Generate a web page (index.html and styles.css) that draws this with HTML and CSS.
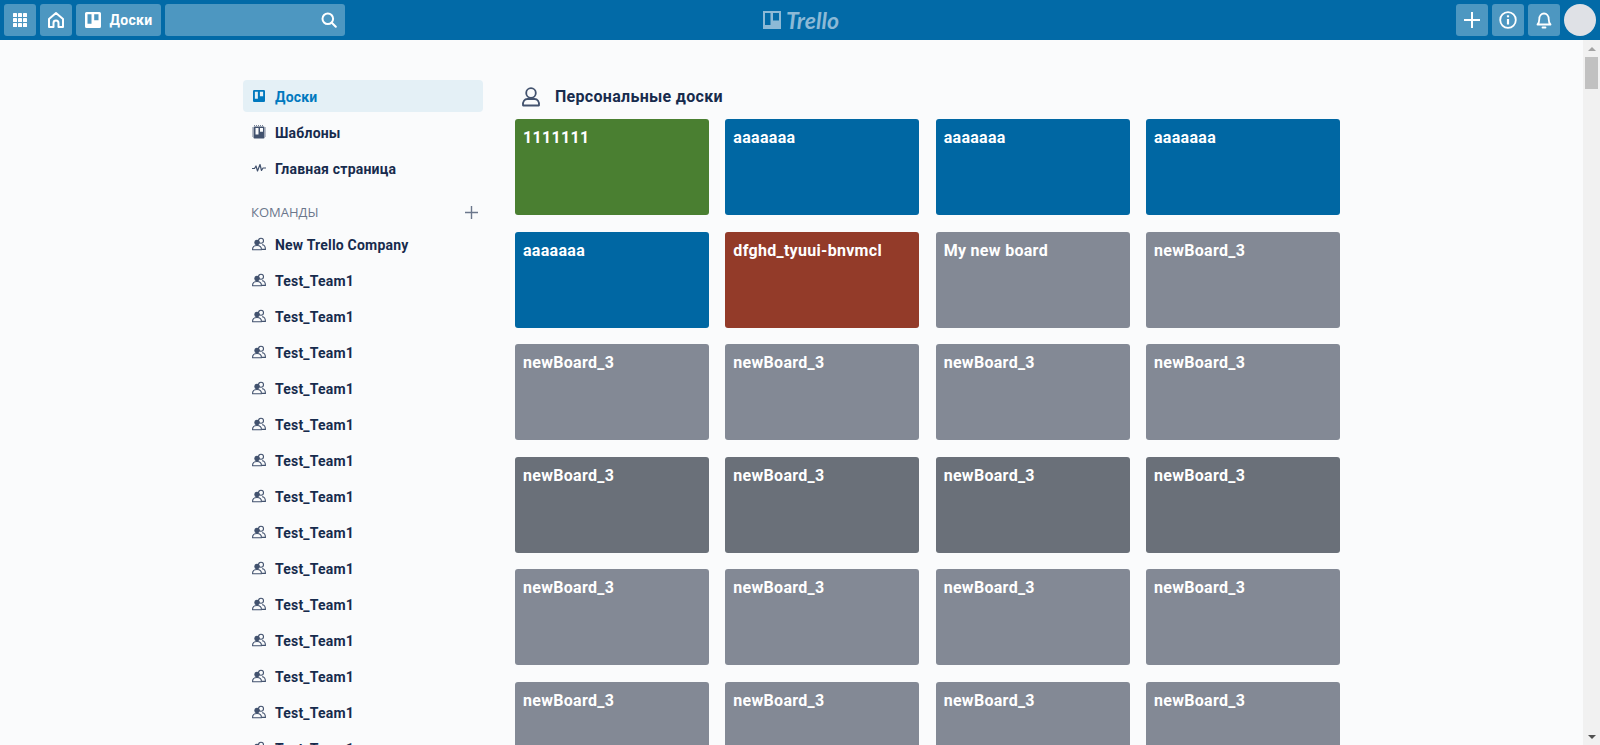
FILE: index.html
```html
<!DOCTYPE html>
<html lang="ru">
<head>
  <meta charset="UTF-8" />
  <title>Доски | Trello</title>
  <link rel="stylesheet" href="styles.css">
</head>
<body>

<svg class="sprite" xmlns="http://www.w3.org/2000/svg">
  <symbol id="i-board" viewBox="0 0 16 16">
    <path fill="currentColor" fill-rule="evenodd" d="M1.5 0h13A1.5 1.5 0 0 1 16 1.5v13a1.5 1.5 0 0 1-1.5 1.5h-13A1.5 1.5 0 0 1 0 14.5v-13A1.5 1.5 0 0 1 1.5 0zM2.5 2.2v9.6h4V2.2zM9.2 2.2v6h4.3v-6z"/>
  </symbol>
  <symbol id="i-team" viewBox="0 0 14 13">
    <g fill="none" stroke="currentColor" stroke-width="1.100">
      <circle cx="9" cy="3.300" r="2.500"/>
      <path d="M10 7.300c2.300 0 3.500 1.600 3.400 4.600H9.800"/>
    </g>
    <circle cx="5" cy="5" r="2.700" fill="currentColor"/>
    <path fill="none" stroke="currentColor" stroke-width="1.100" stroke-linejoin="round" d="M.6 12.300c-.2-3 1.300-4.300 4.400-4.300s4.600 1.300 4.400 4.300z"/>
  </symbol>
</svg>

<header class="topbar">
  <div class="topbar-left">
    <a class="top-btn" href="#">
      <svg width="16" height="16" viewBox="0 0 16 16" fill="#fff">
        <rect x="1" y="1" width="4" height="4" rx=".6"/><rect x="6" y="1" width="4" height="4" rx=".6"/><rect x="11" y="1" width="4" height="4" rx=".6"/>
        <rect x="1" y="6" width="4" height="4" rx=".6"/><rect x="6" y="6" width="4" height="4" rx=".6"/><rect x="11" y="6" width="4" height="4" rx=".6"/>
        <rect x="1" y="11" width="4" height="4" rx=".6"/><rect x="6" y="11" width="4" height="4" rx=".6"/><rect x="11" y="11" width="4" height="4" rx=".6"/>
      </svg>
    </a>
    <a class="top-btn" href="#">
      <svg width="18" height="18" viewBox="0 0 18 18" fill="none" stroke="#fff" stroke-width="2" stroke-linejoin="round">
        <path d="M2 16V8l7-6 7 6v8h-4.500v-4a2.500 2.500 0 0 0-5 0v4z"/>
      </svg>
    </a>
    <a class="top-btn boards-btn" href="#">
      <svg class="boards-icon" width="16" height="16"><use href="#i-board"/></svg>
      <span>Доски</span>
    </a>
    <div class="search">
      <svg width="16" height="16" viewBox="0 0 16 16" fill="none" stroke="#fff" stroke-width="2" stroke-linecap="round">
        <circle cx="6.800" cy="6.800" r="5.300"/><path d="M10.800 10.800l4 4"/>
      </svg>
    </div>
  </div>

  <a class="logo" href="#">
    <svg width="18" height="18" viewBox="0 0 18 18">
      <path fill="#8cb9d6" fill-rule="evenodd" d="M0 0h18v18H0zM2 2v12h5.500V2zM10 2v7.500h6V2z"/>
    </svg>
    <span>Trello</span>
  </a>

  <div class="topbar-right">
    <a class="top-btn" href="#">
      <svg width="16" height="16" viewBox="0 0 16 16" stroke="#fff" stroke-width="2"><path d="M8 0v16M0 8h16"/></svg>
    </a>
    <a class="top-btn" href="#">
      <svg width="18" height="18" viewBox="0 0 18 18" fill="none" stroke="#fff" stroke-width="1.800">
        <circle cx="9" cy="9" r="7.800"/><path d="M9 8v5.500" stroke-width="2.200"/><path d="M9 4.300v2" stroke-width="2.200"/>
      </svg>
    </a>
    <a class="top-btn" href="#">
      <svg width="16" height="18" viewBox="0 0 16 18" fill="none" stroke="#fff" stroke-width="1.800" stroke-linejoin="round">
        <path d="M1.500 13.500c1.500-1.500 1.800-2.500 1.800-5.500 0-3 2-5.500 4.700-5.500s4.700 2.500 4.700 5.500c0 3 .3 4 1.800 5.500z"/>
        <path d="M6.500 16.500h3" stroke-linecap="round"/>
      </svg>
    </a>
    <div class="avatar"></div>
  </div>
</header>

<div class="layout">
  <div class="content">
    <nav class="sidebar">
      <a class="nav-item active" href="#">
        <svg class="nav-icon small"><use href="#i-board"/></svg>
        <span>Доски</span>
      </a>
      <a class="nav-item" href="#">
        <svg class="nav-icon" viewBox="0 0 14 14">
          <path fill="currentColor" fill-rule="evenodd" d="M2.500 1.500h9a1 1 0 0 1 1 1v10a1 1 0 0 1-1 1h-9a1 1 0 0 1-1-1v-10a1 1 0 0 1 1-1zM3.500 3v6.500h3V3zM8 3v3.800h3V3z"/>
          <path stroke="currentColor" stroke-width=".8" stroke-dasharray="1 1" fill="none" d="M2 .4h10M.4 2.500v9M13.600 2.500v9"/>
        </svg>
        <span>Шаблоны</span>
      </a>
      <a class="nav-item" href="#">
        <svg class="nav-icon" viewBox="0 0 14 14" fill="none" stroke="currentColor" stroke-width="1.200" stroke-linejoin="round">
          <path d="M0 7.500h2.500L4 5l1.500 5L8 3.500l1.500 6L11 7h3"/>
        </svg>
        <span>Главная страница</span>
      </a>

      <div class="teams-head">
        <span>Команды</span>
        <svg width="13" height="13" viewBox="0 0 13 13" stroke="currentColor" stroke-width="1.400"><path d="M6.500 0v13M0 6.500h13"/></svg>
      </div>

      <a class="nav-item" href="#"><svg class="nav-icon"><use href="#i-team"/></svg><span>New Trello Company</span></a>
      <a class="nav-item" href="#"><svg class="nav-icon"><use href="#i-team"/></svg><span>Test_Team1</span></a>
      <a class="nav-item" href="#"><svg class="nav-icon"><use href="#i-team"/></svg><span>Test_Team1</span></a>
      <a class="nav-item" href="#"><svg class="nav-icon"><use href="#i-team"/></svg><span>Test_Team1</span></a>
      <a class="nav-item" href="#"><svg class="nav-icon"><use href="#i-team"/></svg><span>Test_Team1</span></a>
      <a class="nav-item" href="#"><svg class="nav-icon"><use href="#i-team"/></svg><span>Test_Team1</span></a>
      <a class="nav-item" href="#"><svg class="nav-icon"><use href="#i-team"/></svg><span>Test_Team1</span></a>
      <a class="nav-item" href="#"><svg class="nav-icon"><use href="#i-team"/></svg><span>Test_Team1</span></a>
      <a class="nav-item" href="#"><svg class="nav-icon"><use href="#i-team"/></svg><span>Test_Team1</span></a>
      <a class="nav-item" href="#"><svg class="nav-icon"><use href="#i-team"/></svg><span>Test_Team1</span></a>
      <a class="nav-item" href="#"><svg class="nav-icon"><use href="#i-team"/></svg><span>Test_Team1</span></a>
      <a class="nav-item" href="#"><svg class="nav-icon"><use href="#i-team"/></svg><span>Test_Team1</span></a>
      <a class="nav-item" href="#"><svg class="nav-icon"><use href="#i-team"/></svg><span>Test_Team1</span></a>
      <a class="nav-item" href="#"><svg class="nav-icon"><use href="#i-team"/></svg><span>Test_Team1</span></a>
      <a class="nav-item" href="#"><svg class="nav-icon"><use href="#i-team"/></svg><span>Test_Team1</span></a>
    </nav>

    <main class="boards">
      <h3 class="boards-title">
        <svg width="20" height="20" viewBox="0 0 20 20" fill="none" stroke="#42526e" stroke-width="1.800" stroke-linejoin="round">
          <circle cx="10" cy="6" r="4.800"/>
          <path d="M2 18.500c-.4-4 1.500-6.500 4.500-6.500h7c3 0 4.900 2.500 4.500 6.500z"/>
        </svg>
        <span>Персональные доски</span>
      </h3>
      <div class="board-grid">
        <a class="board green" href="#">1111111</a>
        <a class="board blue" href="#">aaaaaaa</a>
        <a class="board blue" href="#">aaaaaaa</a>
        <a class="board blue" href="#">aaaaaaa</a>
        <a class="board blue" href="#">aaaaaaa</a>
        <a class="board red" href="#">dfghd_tyuui-bnvmcl</a>
        <a class="board grey" href="#">My new board</a>
        <a class="board grey" href="#">newBoard_3</a>
        <a class="board grey" href="#">newBoard_3</a>
        <a class="board grey" href="#">newBoard_3</a>
        <a class="board grey" href="#">newBoard_3</a>
        <a class="board grey" href="#">newBoard_3</a>
        <a class="board dark" href="#">newBoard_3</a>
        <a class="board dark" href="#">newBoard_3</a>
        <a class="board dark" href="#">newBoard_3</a>
        <a class="board dark" href="#">newBoard_3</a>
        <a class="board grey" href="#">newBoard_3</a>
        <a class="board grey" href="#">newBoard_3</a>
        <a class="board grey" href="#">newBoard_3</a>
        <a class="board grey" href="#">newBoard_3</a>
        <a class="board grey" href="#">newBoard_3</a>
        <a class="board grey" href="#">newBoard_3</a>
        <a class="board grey" href="#">newBoard_3</a>
        <a class="board grey" href="#">newBoard_3</a>
      </div>
    </main>
  </div>

  <div class="scrollbar">
    <span class="arrow-up"></span>
    <div class="track"><div class="thumb"></div></div>
    <span class="arrow-down"></span>
  </div>
</div>

</body>
</html>
```

FILE: styles.css
```css
:root {
  --top: #026aa7;
  --top-btn: #4d97c1;
  --bg: #fafbfc;
  --text: #172b4d;
  --muted: #6b778c;
  --active: #0079bf;
  --radius: 3px;
}

* { box-sizing: border-box; margin: 0; padding: 0; }

html, body {
  height: 100%;
  overflow: hidden;
}

body {
  font-family: Roboto, "Open Sans", sans-serif;
  font-size: 14px;
  background: var(--bg);
  color: var(--text);
  display: flex;
  flex-direction: column;
}

a { color: inherit; text-decoration: none; }

.sprite { display: none; }

/* Top bar */
.topbar {
  flex: none;
  position: relative;
  display: flex;
  align-items: center;
  justify-content: space-between;
  height: 40px;
  padding: 4px;
  background: var(--top);
}

.topbar-left, .topbar-right {
  display: flex;
  gap: 4px;
}

.top-btn {
  display: flex;
  align-items: center;
  justify-content: center;
  width: 32px;
  height: 32px;
  border-radius: var(--radius);
  background: var(--top-btn);
  color: #fff;
}

.boards-btn {
  width: 85px;
  font-weight: 700;
  font-size: 14px;
  letter-spacing: .3px;
  gap: 9px;
}

.boards-icon { flex: none; }

.search {
  display: flex;
  align-items: center;
  justify-content: flex-end;
  width: 180px;
  height: 32px;
  padding-right: 8px;
  border-radius: var(--radius);
  background: var(--top-btn);
}

.logo {
  position: absolute;
  left: 763px;
  top: 11px;
  display: flex;
  align-items: center;
  gap: 5px;
  color: #8cb9d6;
  font-family: Lato, sans-serif;
  font-style: italic;
  font-weight: 700;
  font-size: 23px;
  line-height: 18px;
}

.avatar {
  width: 32px;
  height: 32px;
  border-radius: 50%;
  background: #dfe1e6;
}

/* Page */
.layout {
  flex: 1;
  min-height: 0;
  display: flex;
}

.content {
  flex: 1;
  min-width: 0;
  display: flex;
  justify-content: center;
  padding: 40px 1px 0 0;
  overflow: hidden;
}

.sidebar {
  flex: none;
  width: 240px;
  display: flex;
  flex-direction: column;
  gap: 4px;
}

.nav-item {
  flex: none;
  display: flex;
  align-items: center;
  height: 32px;
  padding-left: 9px;
  border-radius: 4px;
  font-weight: 700;
  font-size: 14px;
  letter-spacing: .2px;
}

.nav-item span { padding-top: 2px; }

.nav-icon {
  flex: none;
  width: 14px;
  height: 14px;
  margin-right: 9px;
  color: #42526e;
}

.nav-icon.small {
  width: 12px;
  height: 12px;
  margin: 0 10px 0 1px;
}

.nav-item.active {
  background: #e4f0f6;
  color: var(--active);
}

.nav-item.active .nav-icon { color: var(--active); }

.teams-head {
  flex: none;
  display: flex;
  align-items: center;
  justify-content: space-between;
  height: 24px;
  margin-top: 12px;
  padding: 0 5px 0 8px;
  color: var(--muted);
  font-family: "Open Sans", sans-serif;
  font-size: 13px;
  text-transform: uppercase;
}

.boards {
  flex: none;
  width: 824px;
  margin-left: 32px;
}

.boards-title {
  display: flex;
  align-items: center;
  height: 33px;
  margin-bottom: 6px;
  padding-left: 6px;
  gap: 14px;
  font-size: 16px;
  font-weight: 700;
  letter-spacing: .3px;
}

.board-grid {
  display: grid;
  grid-template-columns: repeat(4, 194px);
  grid-auto-rows: 96px;
  gap: 16.5px 16.33px;
}

.board {
  padding: 9px 8px 8px;
  border-radius: var(--radius);
  color: #fff;
  font-size: 16px;
  font-weight: 700;
  line-height: 20px;
  letter-spacing: .3px;
}

.green { background: #4a7f31; }
.blue { background: #0067a3; }
.red { background: #933b29; }
.grey { background: #838995; }
.dark { background: #6a7079; }

/* Scrollbar, drawn since the picture shows the classic one */
.scrollbar {
  flex: none;
  width: 17px;
  display: flex;
  flex-direction: column;
  background: #f1f1f1;
}

.arrow-up, .arrow-down {
  flex: none;
  height: 17px;
  display: flex;
  justify-content: center;
  align-items: center;
}

.arrow-up::before, .arrow-down::before {
  content: "";
  border-left: 4px solid transparent;
  border-right: 4px solid transparent;
}

.arrow-up::before { border-bottom: 4px solid #a3a3a3; }
.arrow-down::before { border-top: 4px solid #505050; }

.track { flex: 1; }

.thumb {
  width: 13px;
  height: 32px;
  margin: 0 auto;
  background: #c1c1c1;
}
```
